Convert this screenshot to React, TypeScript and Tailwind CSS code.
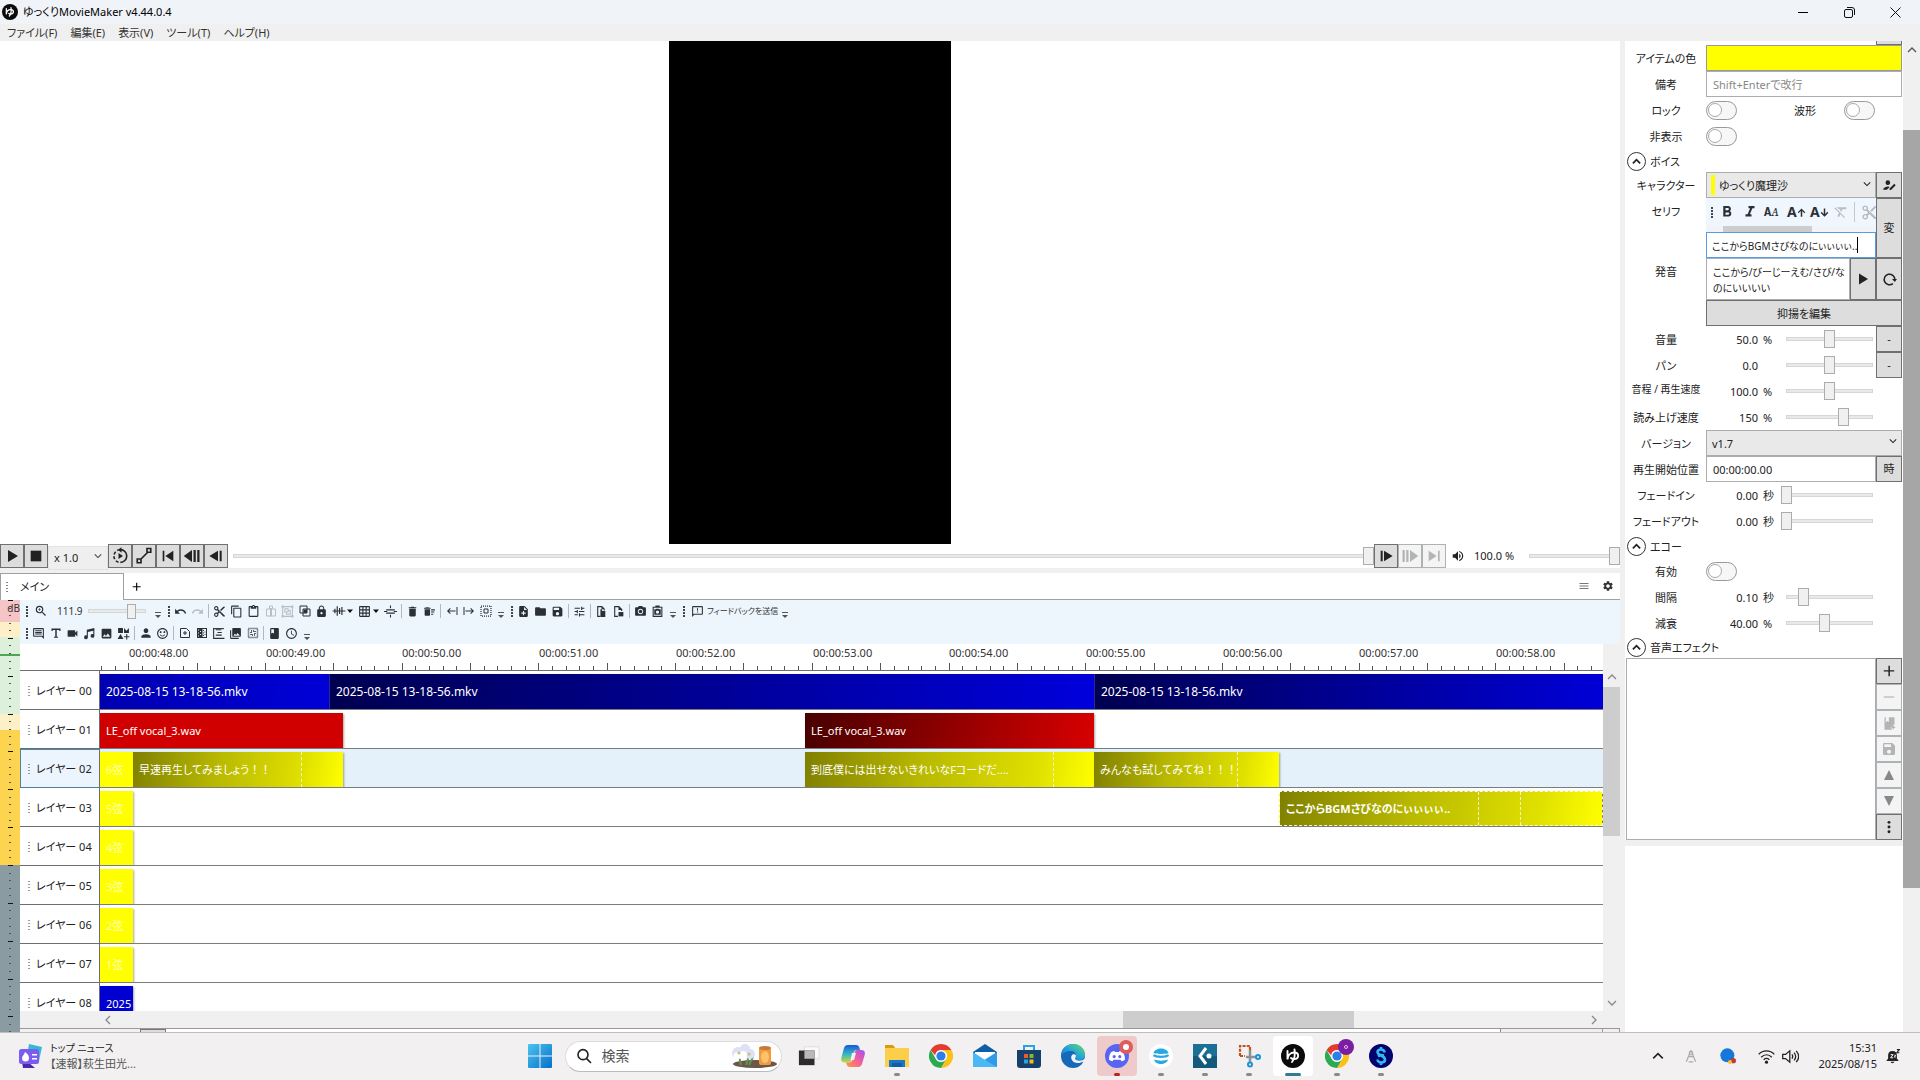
import React from "react";
import {
  MdZoomIn, MdUndo, MdRedo, MdContentCut, MdContentCopy, MdContentPaste, MdLock, MdGridOn,
  MdDelete, MdDeleteSweep, MdNoteAdd, MdFolder, MdSave, MdTune, MdPhotoCamera, MdOutlineFeedback,
  MdOutlineComment, MdVideocam, MdImage, MdPerson, MdBook, MdSchedule, MdPhotoLibrary,
  MdSettings, MdMenu, MdVolumeUp, MdFormatBold, MdFormatItalic, MdFormatClear, MdSentimentSatisfiedAlt,
} from "react-icons/md";

type Ch = { children?: React.ReactNode };

const THUMB =
  "m-0 h-[18px] w-full cursor-default appearance-none bg-transparent outline-none [&::-webkit-slider-thumb]:h-[18px] [&::-webkit-slider-thumb]:w-[11px] [&::-webkit-slider-thumb]:appearance-none [&::-webkit-slider-thumb]:border [&::-webkit-slider-thumb]:border-[#acacac] [&::-webkit-slider-thumb]:bg-[#f0f0f0]";
const THUMB_SM =
  "m-0 h-[15px] w-full cursor-default appearance-none bg-transparent outline-none [&::-webkit-slider-thumb]:h-[15px] [&::-webkit-slider-thumb]:w-[9px] [&::-webkit-slider-thumb]:appearance-none [&::-webkit-slider-thumb]:border [&::-webkit-slider-thumb]:border-[#acacac] [&::-webkit-slider-thumb]:bg-[#f0f0f0]";

function Slider({ value, label, small }: { value: number; label: string; small?: boolean }) {
  return (
    <span className="grid w-full items-center *:[grid-area:1/1]">
      <span className="mx-[5px] h-1 border border-[#d6d6d6] bg-[#e7eaea]" />
      <input type="range" aria-label={label} defaultValue={value} className={small ? THUMB_SM : THUMB} />
    </span>
  );
}

function Svg({ children, s = 14, vb = 24, className = "" }: Ch & { s?: number; vb?: number; className?: string }) {
  return (
    <svg width={s} height={s} viewBox={`0 0 ${vb} ${vb}`} fill="currentColor" className={className} aria-hidden="true">
      {children}
    </svg>
  );
}

function Chevron({ dir = "down", s = 10, className = "" }: { dir?: "up" | "down" | "left" | "right"; s?: number; className?: string }) {
  const d = { up: "M1 7l4-4 4 4", down: "M1 3l4 4 4-4", left: "M7 1L3 5l4 4", right: "M3 1l4 4-4 4" }[dir];
  return (
    <svg width={s} height={s} viewBox="0 0 10 10" fill="none" stroke="currentColor" strokeWidth="1.3" className={className} aria-hidden="true">
      <path d={d} />
    </svg>
  );
}

/* ---------- window frame ---------- */

function Logo({ s }: { s: number }) {
  return (
    <svg width={s} height={s} viewBox="0 0 24 24" aria-hidden="true">
      <circle cx="12" cy="12" r="12" fill="#0b0b0b" />
      <g fill="none" stroke="#fff" strokeWidth="1.9" strokeLinecap="round">
        <path d="M6.500 7v8.500c.3-4 3-7 6.500-7 5.500 0 5.500 6.500 0 6.500-1.500 0-2.500-.5-3-1" />
        <path d="M13.500 5.500c.8 5 .5 9-2.500 12.500" />
      </g>
    </svg>
  );
}

function TitleBar() {
  return (
    <header className="shrink-0">
      <div className="flex h-6 items-center bg-[#f0f4f9] pr-0.5 pl-0.5 text-black">
        <Logo s={16} />
        <h1 className="ml-[5px] flex-1 text-[11px] leading-4">ゆっくりMovieMaker v4.44.0.4</h1>
        <button aria-label="最小化" className="grid h-6 w-[46px] place-items-center">
          <span className="h-px w-2.5 bg-black" />
        </button>
        <button aria-label="元に戻す" className="grid h-6 w-[46px] place-items-center">
          <svg width="11" height="11" viewBox="0 0 11 11" fill="none" stroke="#111" aria-hidden="true">
            <rect x=".5" y="2.500" width="8" height="8" rx="1.500" />
            <path d="M3 .5h5a2.500 2.500 0 0 1 2.500 2.500v5" />
          </svg>
        </button>
        <button aria-label="閉じる" className="grid h-6 w-[46px] place-items-center">
          <svg width="11" height="11" viewBox="0 0 11 11" stroke="#111" aria-hidden="true">
            <path d="M.5.5l10 10M10.500.5l-10 10" />
          </svg>
        </button>
      </div>
      <nav className="flex h-[17px] items-center gap-[13px] bg-[#f0f0f0] pl-[7px] text-[11px] leading-4 text-[#333]">
        {["ファイル(F)", "編集(E)", "表示(V)", "ツール(T)", "ヘルプ(H)"].map((m) => (
          <button key={m}>{m}</button>
        ))}
      </nav>
    </header>
  );
}

/* ---------- preview ---------- */

function Btn({ children, label, off, className = "" }: Ch & { label: string; off?: boolean; className?: string }) {
  return (
    <button
      aria-label={label}
      disabled={off}
      className={`grid h-6 w-6 shrink-0 place-items-center border ${off ? "border-[#adb2b5] bg-[#f4f4f4] text-[#b4b4b4]" : "border-[#707070] bg-[#dddddd] text-[#222]"} ${className}`}
    >
      {children}
    </button>
  );
}

function PlayBar() {
  return (
    <div className="flex h-6 shrink-0 items-center bg-white">
      <Btn label="再生"><Svg s={16}><path d="M6 3v18l15-9z" /></Svg></Btn>
      <Btn label="停止"><Svg s={16}><path d="M4 4h16v16H4z" /></Svg></Btn>
      <div className="relative h-6 w-[60px] shrink-0">
        <select aria-label="再生速度" className="h-6 w-full appearance-none border border-[#e2e2e2] bg-[#efefef] pl-[5px] text-[11px] leading-4 text-[#222]">
          <option>x 1.0</option>
        </select>
        <Chevron s={8} className="pointer-events-none absolute top-2 right-1.5 text-[#444]" />
      </div>
      <Btn label="ループ再生">
        <Svg s={18}>
          <path d="M12.500 3.500a8.500 8.500 0 0 1 0 17" fill="none" stroke="currentColor" strokeWidth="2.200" />
          <path d="M10 20.300a8.500 8.500 0 0 1 0-16.300" fill="none" stroke="currentColor" strokeWidth="2.200" strokeDasharray="4 2.500" />
          <path d="M14 .2L9 3.700l5 3.800zM10 8v8l6-4z" />
        </Svg>
      </Btn>
      <Btn label="パス表示">
        <Svg s={18}>
          <path d="M16 2h5v5h-5zM3 16h5v5H3zM7 17L17 7" fill="none" stroke="currentColor" strokeWidth="2.200" />
        </Svg>
      </Btn>
      <Btn label="先頭へ"><Svg s={16}><path d="M4 4h2.500v16H4zM20 4v16L8 12z" /></Svg></Btn>
      <Btn label="5フレーム戻る"><Svg s={18}><path d="M12 4v16L1 12zM14 4h3v16h-3zM19 4h3v16h-3z" /></Svg></Btn>
      <Btn label="1フレーム戻る"><Svg s={16}><path d="M15 4v16L2 12zM17.500 4h3v16h-3z" /></Svg></Btn>
      <div className="flex min-w-0 flex-1"><Slider label="再生位置" value={100} /></div>
      <Btn label="1フレーム進む"><Svg s={16}><path d="M9 4v16l13-8zM4 4h3v16H4z" /></Svg></Btn>
      <Btn label="5フレーム進む" off><Svg s={18}><path d="M12 4v16l11-8zM2 4h3v16H2zM7 4h3v16H7z" /></Svg></Btn>
      <Btn label="末尾へ" off><Svg s={16}><path d="M18 4h2.500v16H18zM4 4v16l12-8z" /></Svg></Btn>
      <MdVolumeUp className="ml-[5px] size-[14px] shrink-0 text-[#222]" />
      <span className="ml-[9px] w-[50px] shrink-0 text-[11px] leading-4 whitespace-nowrap text-[#222]">100.0 %</span>
      <div className="flex w-[96px] shrink-0"><Slider label="音量" value={100} /></div>
    </div>
  );
}

/* ---------- timeline ---------- */

function Grip() {
  return (
    <svg width="3" height="13" viewBox="0 0 3 13" className="mr-px ml-[3px] shrink-0" fill="#444" aria-hidden="true">
      <path d="M0 1h2v2H0zM0 4h2v2H0zM0 7h2v2H0zM0 10h2v2H0z" />
    </svg>
  );
}
function Sep() {
  return <span className="mx-[2px] h-[14px] w-px shrink-0 bg-[#b3b8bd]" />;
}
function More() {
  return (
    <button aria-label="その他" className="mx-[3px] grid h-[22px] w-[8px] shrink-0 place-items-end pb-[3px]">
      <svg width="7" height="7" viewBox="0 0 7 7" fill="#555" aria-hidden="true"><path d="M0 0h6v1H0zM0 3h6L3 6z" /></svg>
    </button>
  );
}
function Tool({ children, label, off }: Ch & { label: string; off?: boolean }) {
  return (
    <button aria-label={label} disabled={off} className={`grid h-[22px] w-[17px] shrink-0 place-items-center ${off ? "text-[#b9bec3]" : "text-[#2b3036]"}`}>
      {children}
    </button>
  );
}
function Caret() {
  return <Svg s={6} className="mr-[3px] shrink-0 text-[#111]"><path d="M0 6h24L12 20z" /></Svg>;
}
const I = "size-[13px]";

function Toolbars() {
  return (
    <div className="h-11 shrink-0 bg-[#edf5fd] pl-[3px]">
      <div className="flex h-[22px] items-center">
        <Grip />
        <span className="w-0.5 shrink-0" />
        <Tool label="拡大"><MdZoomIn className="size-[14px]" /></Tool>
        <span className="ml-2 w-[24px] shrink-0 text-[10px] leading-4 text-[#333]">111.9</span>
        <div className="ml-[2px] flex w-[68px] shrink-0"><Slider small label="ズーム" value={74} /></div>
        <More />
        <Grip />
        <Tool label="元に戻す"><MdUndo className={I} /></Tool>
        <Tool label="やり直し" off><MdRedo className={I} /></Tool>
        <Sep />
        <Tool label="切り取り"><MdContentCut className={I} /></Tool>
        <Tool label="コピー"><MdContentCopy className={I} /></Tool>
        <Tool label="貼り付け"><MdContentPaste className={I} /></Tool>
        <Tool label="特殊貼り付け" off><Svg s={12}><path d="M3 8h18v14H3zM9 2h6v5H9zM11 8h2v14h-2z" fill="none" stroke="currentColor" strokeWidth="2" /></Svg></Tool>
        <Tool label="グループ化" off>
          <Svg s={13}><path fillRule="evenodd" d="M1 1v4h1v14H1v4h4v-1h14v1h4v-4h-1V5h1V1h-4v1H5V1zM5 4h14v1h1v14h-1v1H5v-1H4V5h1zM6 6v8h3v4h9V9h-4V6zM8 8h4v4H8zM14 11h2v5h-5v-2h3z" /></Svg>
        </Tool>
        <Tool label="グループ解除">
          <Svg s={12}><path d="M2 2h14v14H2zM8 8h14v14H8z" fill="none" stroke="currentColor" strokeWidth="2" /><path d="M9 9h7v7H9z" /></Svg>
        </Tool>
        <Tool label="ロック"><MdLock className={I} /></Tool>
        <Tool label="波形"><Svg s={14}><path d="M1 11h22v2H1zM4 8h2v8H4zM8 4h2v16H8zM12 7h2v10h-2zM16 5h2v14h-2z" /></Svg></Tool>
        <Caret />
        <Tool label="グリッド"><MdGridOn className={I} /></Tool>
        <Caret />
        <Tool label="分割"><Svg s={13}><path d="M11 1h2v5h-2zM11 18h2v5h-2zM4 8h16v2H4zM4 14h16v2H4zM0 11h6v2H0zM18 11h6v2h-6z" /></Svg></Tool>
        <Sep />
        <Tool label="削除"><MdDelete className={I} /></Tool>
        <Tool label="詰めて削除"><MdDeleteSweep className={I} /></Tool>
        <Sep />
        <Tool label="前へ詰める"><Svg s={12}><path d="M21 4h2v16h-2zM8 6l1.500 1.500L6 11h13v2H6l3.500 3.500L8 18l-6-6z" /></Svg></Tool>
        <Tool label="後ろへ詰める"><Svg s={12}><path d="M1 4h2v16H1zM16 6l-1.500 1.500L18 11H5v2h13l-3.500 3.500L16 18l6-6z" /></Svg></Tool>
        <Tool label="全選択">
          <Svg s={12}><path d="M2 2h20v20H2z" fill="none" stroke="currentColor" strokeWidth="2.500" strokeDasharray="2 2" /><path d="M8 8h8v8H8z" fill="none" stroke="currentColor" strokeWidth="2" /></Svg>
        </Tool>
        <More />
        <Grip />
        <Tool label="新規"><MdNoteAdd className={I} /></Tool>
        <Tool label="開く"><MdFolder className={I} /></Tool>
        <Tool label="保存"><MdSave className={I} /></Tool>
        <Sep />
        <Tool label="設定"><MdTune className={I} /></Tool>
        <Sep />
        <Tool label="複製"><Svg s={13}><path d="M4 2h9l5 5v3h-2V8h-4V4H6v16h4v2H4z" /><path d="M10 8h3v3h6v11h-9z" /></Svg></Tool>
        <Tool label="書き出し"><Svg s={13}><path d="M4 2h9l6 6v3h-2V9h-5V4H6v16h5v2H4z" /><path d="M12 13h9v8h-9z" /></Svg></Tool>
        <Sep />
        <Tool label="スクリーンショット"><MdPhotoCamera className={I} /></Tool>
        <Tool label="画像をコピー"><Svg s={13}><path fillRule="evenodd" d="M8 1h8v2h5v19H3V3h5zM5 5v15h14V5zM6 8h3l1-1h4l1 1h3v10H6zM12 10a3 3 0 1 0 0 6 3 3 0 0 0 0-6z" /></Svg></Tool>
        <More />
        <Grip />
        <button className="ml-1 flex h-[22px] shrink-0 items-center gap-[3px] text-[8px] leading-4 whitespace-nowrap text-[#333]">
          <MdOutlineFeedback className={I} />フィードバックを送信
        </button>
        <More />
      </div>
      <div className="flex h-[22px] items-center">
        <Grip />
        <Tool label="ボイス"><MdOutlineComment className={I} /></Tool>
        <Tool label="テキスト"><Svg s={12}><path d="M3 3h18v5h-2l-1-2h-4.500v13l2.500 1v1.500H8V20l2.500-1V6H6L5 8H3z" /></Svg></Tool>
        <Tool label="動画"><MdVideocam className={I} /></Tool>
        <Tool label="音声"><Svg s={13}><path d="M21 2v14.500a3.500 3.500 0 1 1-2-3.200V7L9 9v10a3.500 3.500 0 1 1-2-3.200V5z" /></Svg></Tool>
        <Tool label="画像"><MdImage className={I} /></Tool>
        <Tool label="図形"><Svg s={13}><path d="M2 2h9v9H2zM6.500 13L12 22H1zM17.500 7L22 2v9h-9V2zM17 13h2v4h4v2h-4v4h-2v-4h-4v-2h4z" /></Svg></Tool>
        <Sep />
        <Tool label="立ち絵"><MdPerson className="size-[14px]" /></Tool>
        <Tool label="表情"><MdSentimentSatisfiedAlt className={I} /></Tool>
        <Sep />
        <Tool label="エフェクト"><Svg s={12}><path d="M3 3h12l6 6v12H3z" fill="none" stroke="currentColor" strokeWidth="2" /><path d="M11 8h2v3h3v2h-3v3h-2v-3H8v-2h3z" /></Svg></Tool>
        <Tool label="シーン切り替え"><Svg s={12}><path fillRule="evenodd" d="M2 2h20v20H2zM13 4v16h7V4z" /><path fill="#edf5fd" d="M4 5h2v2H4zM4 11h2v2H4zM4 17h2v2H4zM8 8h2v2H8zM8 14h2v2H8z" /><path d="M14 6h2v2h-2zM14 11h2v2h-2zM14 16h2v2h-2zM17 9h2v2h-2zM17 14h2v2h-2z" /></Svg></Tool>
        <Tool label="グループ制御"><Svg s={13}><path d="M2 2h2v18h19v2H2zM7 4h10v2H7zM10 9h8v2h-8zM7 14h11v2H7z" /><path d="M2 2h20v2H2z" /></Svg></Tool>
        <Tool label="画像一覧"><MdPhotoLibrary className={I} /></Tool>
        <Tool label="範囲"><Svg s={12}><path d="M3 3h18v18H3zM8 8h8v8H8z" fill="none" stroke="currentColor" strokeWidth="3" strokeDasharray="2 2" /></Svg></Tool>
        <Sep />
        <Tool label="テンプレート"><MdBook className={I} /></Tool>
        <Tool label="履歴"><MdSchedule className={I} /></Tool>
        <More />
      </div>
    </div>
  );
}

const SEC = 136.7;
const TIMES = ["48", "49", "50", "51", "52", "53", "54", "55", "56", "57", "58"];
const TICKS = Array.from({ length: 110 }, (_, i) => ({ x: Math.round((i * SEC) / 10) + 2, tall: (i + 8) % 5 === 0 }));

function Ruler() {
  return (
    <div className="flex h-[27px] shrink-0 flex-col justify-between overflow-hidden border-b border-[#6e6e6e] bg-white pl-[79px] text-[#333]">
      <div className="flex pl-[30px] text-[11px] leading-[18px]">
        {TIMES.map((t, i) => (
          <span key={t} className="shrink-0" style={{ width: Math.round((i + 1) * SEC) - Math.round(i * SEC) }}>
            00:00:{t}.00
          </span>
        ))}
      </div>
      <svg className="h-[7px] w-full shrink-0" aria-hidden="true">
        {TICKS.map((t) => (
          <rect key={t.x} x={t.x} y={t.tall ? 0 : 3} width="1" height={t.tall ? 7 : 4} fill="#555" />
        ))}
      </svg>
    </div>
  );
}

function Clip({ children, className, marks = [], label = "" }: Ch & { className: string; marks?: number[]; label?: string }) {
  return (
    <div className={`relative flex h-[35px] shrink-0 items-center overflow-hidden pl-[6px] whitespace-nowrap shadow-[1px_1px_2px_rgba(0,0,0,.35)] ${className}`}>
      {label}
      {children}
      {marks.map((m) => (
        <span key={m} className="absolute inset-y-0 border-l border-dashed border-white/80" style={{ right: m }} />
      ))}
    </div>
  );
}

const YELLOW = "text-[11px] bg-[linear-gradient(100deg,#808000,#b8b800_40%,#e0e000_80%,#ffff00)]";

function Bangs({ n }: { n: number }) {
  return <span className="[font-feature-settings:normal]">{"！".repeat(n)}</span>;
}

function Rows() {
  const strings = ["6弦", "5弦", "4弦", "3弦", "2弦", "1弦"];
  const str = (i: number) => <Clip className="w-[33px] bg-[#ffff00] text-[11px] text-[#ffffb0]" label={strings[i]} />;
  const rows: React.ReactNode[] = [
    <>
      <Clip className="w-[229px] bg-[linear-gradient(100deg,#0000b0,#0000d8)]" label="2025-08-15 13-18-56.mkv" />
      <Clip className="w-[765px] border-l border-[#2a2a90] bg-[linear-gradient(98deg,#000050,#0000dc)]" label="2025-08-15 13-18-56.mkv" />
      <Clip className="min-w-0 flex-1 border-l border-[#2a2a90] bg-[linear-gradient(98deg,#000050,#0000d8)]" label="2025-08-15 13-18-56.mkv" />
    </>,
    <>
      <Clip className="w-[243px] bg-[#d00000] text-[11px]" label="LE_off vocal_3.wav" />
      <Clip className="ml-[462px] w-[289px] bg-[linear-gradient(100deg,#480000,#d80000)] text-[11px]" label="LE_off vocal_3.wav" />
    </>,
    <>
      {str(0)}
      <Clip className={`w-[210px] ${YELLOW}`} marks={[41]} label="早速再生してみましょう"><Bangs n={2} /></Clip>
      <Clip className={`ml-[462px] w-[289px] ${YELLOW}`} marks={[40]} label="到底僕には出せないきれいなFコードだ...." />
      <Clip className={`w-[185px] ${YELLOW}`} marks={[41]} label="みんなも試してみてね"><Bangs n={3} /></Clip>
    </>,
    <>
      {str(1)}
      <Clip className={`ml-[1146px] min-w-0 flex-1 border border-dashed border-white/90 font-bold ${YELLOW}`} marks={[81, 123]} label="ここからBGMさびなのにぃぃぃぃ.." />
    </>,
    str(2), str(3), str(4), str(5),
    <Clip className="w-[33px] bg-[#0000d0] text-[11px]" label="2025" />,
  ];
  return (
    <div className="min-w-0 flex-1 overflow-hidden bg-white">
      {rows.map((r, i) => (
        <div key={i} className="flex h-[39px]">
          <div className={`flex w-20 shrink-0 items-center border-r border-b border-[#6e6e6e] pt-0.5 pl-2 text-[11px] leading-4 whitespace-nowrap text-[#222] ${i === 2 ? "border-b-[#4f7fa0] bg-[#ecf5fd] shadow-[inset_1px_1px_0_#4f86a8]" : ""}`}>
            <svg width="2" height="11" viewBox="0 0 2 11" fill="#999" className="mr-[6px]" aria-hidden="true"><path d="M0 0h2v1H0zM0 3h2v1H0zM0 6h2v1H0zM0 9h2v1H0z" /></svg>
            レイヤー 0{i}
          </div>
          <div className={`flex min-w-0 flex-1 overflow-hidden border-b border-[#7c7c7c] pt-[3px] text-[12px] leading-4 text-white ${i === 2 ? "bg-[#e4f1fb]" : ""}`}>{r}</div>
        </div>
      ))}
    </div>
  );
}

const BANDS = ["h-[22px] bg-[#f5c4c6]", "h-[15px] bg-[#fdf0c6]", "h-[77px] bg-[#dcf0dc]", "h-[16px] bg-[#fdf0c6]", "h-[135px] bg-[#fdd44f]", "flex-1 bg-[#8b9ba2]"];

function Meter() {
  return (
    <div className="relative flex w-5 shrink-0 flex-col overflow-hidden">
      {BANDS.map((b) => <div key={b} className={b} />)}
      <svg className="absolute inset-0 h-full w-full" aria-hidden="true">
        {Array.from({ length: 60 }, (_, i) => {
          const long = i % 5 === 0;
          return <rect key={i} x={long ? 8 : 9} y={Math.round(i * 7.57)} width={long ? 5 : 2} height="1" fill={long ? "#111" : "#555"} />;
        })}
        <rect x="0" y="54" width="20" height="2" fill="#4ea552" />
      </svg>
      <span className="absolute top-0 right-0 text-[10px] leading-4 text-[#333]">dB</span>
    </div>
  );
}

function Timeline() {
  return (
    <section className="flex shrink-0 flex-col">
      <div className="flex h-[27px] items-stretch bg-white">
        <button className="flex w-[124px] items-center border border-b-0 border-[#a0a0a0] pl-[5px] text-[11px] leading-4 text-[#222]">
          <svg width="2" height="10" viewBox="0 0 2 10" fill="#888" className="mr-3" aria-hidden="true"><path d="M0 0h2v1H0zM0 3h2v1H0zM0 6h2v1H0zM0 9h2v1H0z" /></svg>
          メイン
        </button>
        <div className="flex flex-1 items-center border-b border-[#a0a0a0] pl-[8px]">
          <button aria-label="タブを追加"><Svg s={9}><path d="M11 2h3v9h9v3h-9v9h-3v-9H2v-3h9z" /></Svg></button>
          <button aria-label="メニュー" className="mr-3 ml-auto text-[#777]"><MdMenu className="size-3" /></button>
          <button aria-label="設定" className="mr-1.5 text-[#333]"><MdSettings className="size-3" /></button>
        </div>
      </div>
      <div className="flex">
        <Meter />
        <div className="flex min-w-0 flex-1 flex-col">
          <Toolbars />
          <div className="flex">
            <div className="min-w-0 flex-1">
              <Ruler />
              <div className="flex h-[340px]"><Rows /></div>
            </div>
            <div className="flex w-[17px] shrink-0 flex-col items-center bg-[#f0f0f0] pt-7 pb-[3px] text-[#888]">
              <Chevron dir="up" className="mb-[5px]" />
              <div className="h-[149px] w-full bg-[#cdcdcd]" />
              <Chevron className="mt-auto" />
            </div>
          </div>
          <div className="flex h-[17px] items-center bg-[#f0f0f0] pr-[21px] pl-[83px] text-[#888]">
            <Chevron dir="left" />
            <div className="flex h-full flex-1 justify-end"><div className="mr-[235px] h-full w-[231px] bg-[#cdcdcd]" /></div>
            <Chevron dir="right" />
          </div>
          <div className="flex h-1 border-t border-[#999] bg-white">
            <div className="w-[120px] bg-[#f2f2f2]" />
            <div className="w-[26px] border border-b-0 border-[#777] bg-[#ddd]" />
            <div className="flex-1" />
            <div className="w-[102px] border-l border-[#888] bg-[#f0f0f0]" />
            <div className="w-[18px] border-x border-[#999] bg-[#f0f0f0]" />
          </div>
        </div>
      </div>
    </section>
  );
}

/* ---------- properties ---------- */

function Row({ label, children, id, small }: Ch & { label: string; id?: string; small?: boolean }) {
  return (
    <div className="flex h-[26px] items-center">
      <label htmlFor={id} className={`w-[80px] shrink-0 text-center whitespace-nowrap ${small ? "pb-1 text-[10px]" : "pt-0.5"}`}>{label}</label>
      {children}
    </div>
  );
}

function Toggle({ id }: { id: string }) {
  return (
    <input
      id={id}
      type="checkbox"
      role="switch"
      className="flex h-[19px] w-[31px] shrink-0 appearance-none items-center rounded-full border border-[#999] bg-[#f7f7f7] pl-px before:size-[14px] before:rounded-full before:border before:border-[#aaa] before:bg-white before:content-['']"
    />
  );
}

function SliderRow({ label, value, unit, pos, btn, small }: { label: string; value: string; unit: string; pos: number; btn?: boolean; small?: boolean }) {
  return (
    <Row label={label} small={small}>
      <span className="w-[52px] shrink-0 pt-0.5 text-right">{value}</span>
      <span className="ml-[5px] w-[18px] shrink-0 pt-0.5">{unit}</span>
      <div className="mr-[-2px] flex min-w-0 flex-1"><Slider label={label} value={pos} /></div>
      {btn ? <PBtn label={`${label}のアニメーション`}>-</PBtn> : <span className="w-[26px] shrink-0" />}
    </Row>
  );
}

function PBtn({ children, label, off, tall }: Ch & { label: string; off?: boolean; tall?: boolean }) {
  return (
    <button
      aria-label={label}
      disabled={off}
      className={`relative grid w-[26px] shrink-0 place-items-center border ${tall ? "h-full" : "h-[26px]"} ${off ? "border-[#adb2b5] bg-[#f4f4f4] text-[#b4b4b4]" : "border-[#707070] bg-[#dddddd] text-[#222]"}`}
    >
      {children}
    </button>
  );
}

function Head({ children, className }: Ch & { className: string }) {
  return (
    <button className={`flex w-full items-center gap-1 pt-px pl-px ${className}`}>
      <span className="grid size-[19px] place-items-center rounded-full border border-[#333]">
        <svg width="9" height="9" viewBox="0 0 10 10" fill="none" stroke="#222" strokeWidth="2" aria-hidden="true"><path d="M1 7l4-4 4 4" /></svg>
      </span>
      <span className="pt-px">{children}</span>
    </button>
  );
}

function Properties() {
  return (
    <aside className="flex w-[278px] shrink-0 flex-col bg-[#f0f0f0] text-[11px] leading-4 text-[#222]">
      <div className="bg-white pr-px pl-px">
        <div className="flex h-1 justify-end"><div className="w-[26px] border border-t-0 border-[#707070] bg-[#ddd]" /></div>
        <Row label="アイテムの色"><button aria-label="アイテムの色" className="h-[26px] flex-1 border border-[#999] bg-[#ffff00]" /></Row>
        <Row label="備考" id="memo">
          <input id="memo" placeholder="Shift+Enterで改行" className="h-[26px] min-w-0 flex-1 border border-[#abadb3] px-1.5 pt-px outline-none placeholder:text-[#888]" />
        </Row>
        <Row label="ロック" id="lock">
          <Toggle id="lock" />
          <label htmlFor="wave" className="mr-7 ml-auto pt-0.5">波形</label>
          <Toggle id="wave" />
          <span className="w-[27px]" />
        </Row>
        <Row label="非表示" id="hide"><Toggle id="hide" /></Row>
        <Head className="h-[23px]">ボイス</Head>
        <Row label="キャラクター" id="chara">
          <div className="relative h-[26px] min-w-0 flex-1">
            <select id="chara" className="h-full w-full appearance-none border border-[#acacac] bg-[#e9e9e9] pt-px pl-[12px]"><option>ゆっくり魔理沙</option></select>
            <span className="pointer-events-none absolute top-[3px] left-[5px] h-5 w-1 bg-[#ffff00]" />
            <Chevron s={8} className="pointer-events-none absolute top-2 right-[5px]" />
          </div>
          <PBtn label="キャラクター編集">
            <Svg s={14}><path d="M10 4a4 4 0 1 1 0 8 4 4 0 0 1 0-8zM2 20c0-3 4-5.500 9-5.500L13 16l-5 4zM21 10l2.500 2.500-8 8H13V18z" /></Svg>
          </PBtn>
        </Row>
        <div className="flex h-[60px]">
          <label htmlFor="serif" className="w-[80px] shrink-0 pt-1.5 text-center">セリフ</label>
          <div className="flex min-w-0 flex-1 flex-col">
            <div className="flex h-[28px] items-center overflow-hidden bg-[#f0f6fd] pl-[2px] text-[#2b3036]">
              <Grip />
              <button aria-label="太字" className="ml-[3px] w-[23px] shrink-0"><MdFormatBold className="size-[18px]" /></button>
              <button aria-label="斜体" className="w-[23px] shrink-0"><MdFormatItalic className="size-[18px]" /></button>
              <button aria-label="フォント" className="w-[23px] shrink-0 text-left leading-none">
                <span className="font-mono text-[12px] font-bold">A</span><span className="font-serif text-[13px] italic">A</span>
              </button>
              <button aria-label="文字を大きく" className="flex w-[23px] shrink-0 items-center text-[14px] font-bold">A<Svg s={9}><path d="M12 1l10 10-2 3-6-6v15h-4V8l-6 6-2-3z" /></Svg></button>
              <button aria-label="文字を小さく" className="flex w-[23px] shrink-0 items-center text-[14px] font-bold">A<Svg s={9}><path d="M12 23l10-10-2-3-6 6V1h-4v15l-6-6-2 3z" /></Svg></button>
              <button aria-label="書式をクリア" className="w-[21px] shrink-0 text-[#b9bec3]"><MdFormatClear className="size-4" /></button>
              <span className="mr-1.5 h-5 w-px shrink-0 bg-[#c3c8cd]" />
              <MdContentCut className="size-[17px] shrink-0 text-[#b4babf]" />
            </div>
            <div className="h-1.5 bg-[#f0f3f7] pl-[17px]"><div className="h-full w-[89px] bg-[#cdcdcd]" /></div>
            <div className="relative flex h-[26px]">
              <input id="serif" defaultValue="ここからBGMさびなのにぃぃぃぃ.." className="h-full w-full border border-[#569de5] bg-white pl-[5px] text-[10px] outline-none" />
              <span className="absolute top-[5px] right-[18px] h-4 w-px bg-black" />
            </div>
          </div>
          <PBtn label="変換" tall>変</PBtn>
        </div>
        <div className="flex h-[42px]">
          <label htmlFor="yomi" className="w-[80px] shrink-0 pt-1.5 text-center">発音</label>
          <textarea id="yomi" defaultValue={"ここから/びーじーえむ/さび/な\nのにいいいい"} className="min-w-0 flex-1 resize-none overflow-hidden border border-[#abadb3] px-1.5 pt-[5px] text-[10px] leading-4 whitespace-pre outline-none" />
          <PBtn label="発音を再生" tall><Svg s={12}><path d="M4 1v22l18-11z" /></Svg></PBtn>
          <PBtn label="発音を再生成" tall>
            <Svg s={15}><path d="M20.500 12a8.500 8.500 0 1 0-3 6.500" fill="none" stroke="currentColor" strokeWidth="2.400" /><path d="M16 11h8l-3.500 5z" /></Svg>
          </PBtn>
        </div>
        <div className="pl-[80px]"><button className="block h-[26px] w-full border border-[#707070] bg-[#dddddd] pt-0.5">抑揚を編集</button></div>
        <SliderRow label="音量" value="50.0" unit="%" pos={50} btn />
        <SliderRow label="パン" value="0.0" unit="" pos={50} btn />
        <SliderRow label="音程 / 再生速度" value="100.0" unit="%" pos={50} small />
        <SliderRow label="読み上げ速度" value="150" unit="%" pos={66} />
        <Row label="バージョン" id="ver">
          <div className="relative h-[26px] min-w-0 flex-1">
            <select id="ver" className="h-full w-full appearance-none border border-[#acacac] bg-[#e9e9e9] pt-px pl-[5px]"><option>v1.7</option></select>
            <Chevron s={8} className="pointer-events-none absolute top-[7px] right-[5px]" />
          </div>
        </Row>
        <Row label="再生開始位置" id="start">
          <input id="start" defaultValue="00:00:00.00" className="h-[26px] min-w-0 flex-1 border border-[#abadb3] px-1.5 outline-none" />
          <PBtn label="時間">時</PBtn>
        </Row>
        <SliderRow label="フェードイン" value="0.00" unit="秒" pos={0} />
        <SliderRow label="フェードアウト" value="0.00" unit="秒" pos={0} />
        <Head className="h-[24px]">エコー</Head>
        <Row label="有効" id="echo"><Toggle id="echo" /></Row>
        <SliderRow label="間隔" value="0.10" unit="秒" pos={20} />
        <SliderRow label="減衰" value="40.00" unit="%" pos={44} />
        <Head className="h-[22px]">音声エフェクト</Head>
        <div className="flex">
          <div className="flex-1 border border-[#abadb3]" />
          <div className="flex flex-col">
            <PBtn label="追加"><Svg s={14}><path d="M11 3h2.500v7.500H21V13h-7.500v8H11v-8H3v-2.500h8z" /></Svg></PBtn>
            <PBtn label="削除" off><Svg s={14}><path d="M3 11h18v2H3z" /></Svg></PBtn>
            <PBtn label="テンプレートに追加" off><Svg s={15}><path fillRule="evenodd" d="M4 2h2v8l2.500-2L11 10V2h9v12h-3v3h-3v3h2v2H4zM17 15h2v2h2v2h-2v2h-2v-2h-2v-2h2z" /></Svg></PBtn>
            <PBtn label="保存" off><MdSave className="size-4" /></PBtn>
            <PBtn label="上へ" off><Svg s={12} className="text-[#888]"><path d="M12 2l10 20H2z" /></Svg></PBtn>
            <PBtn label="下へ" off><Svg s={12} className="text-[#888]"><path d="M12 22L2 2h20z" /></Svg></PBtn>
            <PBtn label="その他"><Svg s={14}><circle cx="12" cy="4" r="2.500" /><circle cx="12" cy="12" r="2.500" /><circle cx="12" cy="20" r="2.500" /></Svg></PBtn>
          </div>
        </div>
      </div>
      <div className="mt-1.5 flex-1 bg-white" />
    </aside>
  );
}

/* ---------- taskbar ---------- */

function Chrome() {
  return (
    <Svg s={24}>
      <path fill="#e33b2e" d="M12 0a12 12 0 0 1 10.400 6H12a6 6 0 0 0-5.200 3v3L1.600 6A12 12 0 0 1 12 0z" />
      <path fill="#fbc116" d="M22.400 6A12 12 0 0 1 12 24l5.200-9a6 6 0 0 0-.7-7L12 6z" />
      <path fill="#2da94f" d="M1.600 6A12 12 0 0 0 12 24l5.200-9a6 6 0 0 1-10.400 0z" />
      <circle cx="12" cy="12" r="5.800" fill="#fff" /><circle cx="12" cy="12" r="4.600" fill="#2f7de9" />
    </Svg>
  );
}

const APPS: { name: string; run?: string; tile?: string; icon: React.ReactNode }[] = [
  { name: "タスクビュー", icon: <Svg s={22}><path fill="#fafafa" stroke="#ddd" d="M7 2h16v13H7z" /><path fill="#2c2c2c" d="M1 6h17v16H1z" /><path fill="#b9b9b9" d="M7 6h11v9H7z" /></Svg> },
  { name: "Copilot", icon: (
    <Svg s={24}>
      <defs>
        <linearGradient id="cpa" x1="0" y1="0" x2="0" y2="1"><stop offset="0" stopColor="#1b57d6" /><stop offset=".5" stopColor="#2fb5c8" /><stop offset="1" stopColor="#c8d83c" /></linearGradient>
        <linearGradient id="cpb" x1="1" y1="0" x2="0" y2="1"><stop offset="0" stopColor="#a54ff0" /><stop offset=".5" stopColor="#f2609a" /><stop offset="1" stopColor="#ff9a3c" /></linearGradient>
      </defs>
      <path fill="url(#cpa)" d="M7 1h8c2 0 3 1 3.500 3l.5 2h-3c-2 0-3 1-3.600 3l-2 7c-.5 2-1.500 2.500-3.400 2.500H4c-3.500 0-4.500-2-3.500-5.500l2.500-9C3.600 2 5 1 7 1z" />
      <path fill="url(#cpb)" d="M17 23H9c-2 0-3-1-3.500-3L5 18.500h3c2 0 3-1 3.600-3l2-7C14.100 6.500 15 6 17 6h3c3.500 0 4.500 2 3.500 5.500l-2.500 8.500c-.6 2-2 3-4 3z" />
      <path fill="#f3f2f3" d="M11 9l4 0-2 7h-3.500z" />
    </Svg>) },
  { name: "エクスプローラー", run: "w-1.5 bg-[#8a8a8a]", icon: <Svg s={24}><path fill="#d99a12" d="M0 1h8l3 4H0z" /><path fill="#fbcf4a" d="M0 4h24v19H0z" /><path fill="#1b74c4" d="M4 16h16v7H4z" /><path fill="#0f5da8" d="M7 19h10v4H7z" /></Svg> },
  { name: "Chrome", icon: <Chrome /> },
  { name: "メール", icon: <Svg s={24}><path fill="#0f5ca8" d="M12 0l12 8v3H0V8z" /><path fill="#fff" d="M2 8h20v9H2z" /><path fill="#2f9be8" d="M24 8v15H0z" /><path fill="#49b8f5" d="M0 8l12 8L24 23H0z" /></Svg> },
  { name: "Microsoft Store", icon: <Svg s={24}><path fill="none" stroke="#27a5e0" strokeWidth="2" d="M7 7V2h10v5" /><path fill="#173f6b" d="M0 6h24v15a3 3 0 0 1-3 3H3a3 3 0 0 1-3-3z" /><path fill="#ef5a2b" d="M7 10h4v4H7z" /><path fill="#80bb2a" d="M12.500 10h4v4h-4z" /><path fill="#27a5e0" d="M7 15.500h4v4H7z" /><path fill="#fbb917" d="M12.500 15.500h4v4h-4z" /></Svg> },
  { name: "Edge", icon: (
    <Svg s={24}>
      <defs><linearGradient id="edg" x1="0" y1="1" x2="1" y2="0"><stop offset="0" stopColor="#1565c0" /><stop offset=".5" stopColor="#21a5dc" /><stop offset="1" stopColor="#6ade5c" /></linearGradient></defs>
      <circle cx="12" cy="12" r="12" fill="#1668b8" />
      <path fill="url(#edg)" d="M0 12C0 5 5 0 12 0s12 5 12 10.500c0 3.500-3 6-6 6-2.500 0-4-1-4-2 0-.8 1-1.200 1-3C15 9 13 7 9.500 7 5 7 1.500 9.500 0 12z" />
      <path fill="#f3f2f3" d="M11.500 10.500c-2.500 2-1.500 8 4.500 8.500 2.500.2 4.500-.5 6.500-1.500-.8 1.500-1.500 2-1.500 2l3-.5V14c-1 1.800-3 2.700-5.500 2.700-2.500 0-4.500-.8-4.500-2.200 0-.8 1-1.200 1-3-.8-1.300-2.200-1.500-3.500-1z" />
    </Svg>) },
  { name: "Discord", run: "w-1.5 bg-[#b3261e]", tile: "bg-[#efcaca]", icon: (
    <span className="relative block">
      <Svg s={24}><circle cx="12" cy="12" r="12" fill="#5865f2" /><path fill="#fff" fillRule="evenodd" d="M9.500 7l.5 1h4l.5-1c1.500.2 2.500.6 3.500 1.200C19.500 10.500 20 13 20 15.500c-1 1-2.300 1.500-3.500 1.800l-1-1.500h-7l-1 1.500c-1.200-.3-2.500-.8-3.500-1.800 0-2.500.5-5 2-7.300C7 7.600 8 7.200 9.500 7zM9.200 11a1.600 1.600 0 1 0 0 3.200 1.600 1.600 0 0 0 0-3.200zm5.600 0a1.600 1.600 0 1 0 0 3.200 1.600 1.600 0 0 0 0-3.200z" /></Svg>
      <span className="absolute -top-1 -right-1 grid size-[14px] place-items-center rounded-full bg-[#de5c5c]"><span className="size-1.5 rounded-full bg-white" /></span>
    </span>) },
  { name: "オーディオ", run: "w-1.5 bg-[#8a8a8a]", icon: <Svg s={24}><circle cx="12" cy="12" r="12" fill="#fff" /><path fill="#28a8e0" d="M4.500 9c1.500-6 13.500-6 15 0-1 1.200-14 1.200-15 0zM4 12c0-1.500 1.500-2 2.500-1.200 3 1.200 8 1.200 11 0 1-.8 2.500-.3 2.500 1.200-2 2.500-14 2.500-16 0zM5 15.500c4 1.500 10 1.500 14 0-1.500 6-12.500 6-14 0z" /></Svg> },
  { name: "キュー", run: "w-1.5 bg-[#8a8a8a]", icon: <Svg s={24}><path fill="#145a7c" d="M0 0h24v24H0z" /><path fill="#1c7096" d="M0 0h24v12H0z" /><path fill="none" stroke="#fff" strokeWidth="3" d="M13 4l-6 8 6 8" /><circle cx="16" cy="12" r="2.500" fill="#fff" /></Svg> },
  { name: "Snipping Tool", run: "w-1.5 bg-[#8a8a8a]", icon: <Svg s={24}><path fill="none" stroke="#c0531a" strokeWidth="2.200" strokeDasharray="3 1.200" d="M3 12V2h10v6M3 12h5" /><path fill="none" stroke="#8b9198" strokeWidth="2.500" d="M13 6v12M9 13h10" /><circle cx="13" cy="20.500" r="2" fill="none" stroke="#1d93d8" strokeWidth="2" /><circle cx="21" cy="13" r="2" fill="none" stroke="#1d93d8" strokeWidth="2" /></Svg> },
  { name: "ゆっくりMovieMaker", run: "w-4 bg-[#317d90]", tile: "bg-white", icon: <Logo s={24} /> },
  { name: "Chrome プロファイル", run: "w-1.5 bg-[#8a8a8a]", icon: <span className="relative block"><Chrome /><span className="absolute -top-[5px] -right-[5px] grid size-4 place-items-center rounded-full bg-[#7b1fa2]"><span className="size-1 rounded-full border border-[#e6b8f5]" /></span></span> },
  { name: "S", run: "w-1.5 bg-[#8a8a8a]", icon: <Svg s={24}><circle cx="12" cy="12" r="12" fill="#03036e" /><path fill="none" stroke="#31b9f2" strokeWidth="2.600" d="M15.500 8.500c0-4-7-4-7-.5 0 4 7.500 3 7.500 7.500 0 4-7.500 4-7.500 0M9 12.500c1.500-1.500 4-1.500 6-1M12 3v3M12 18v3" /></Svg> },
];

function Taskbar() {
  return (
    <footer className="grid h-12 shrink-0 grid-cols-[1fr_auto_1fr] items-center border-t border-[#bdbdbd] bg-[#f2f0f1] pb-px text-[#222]">
      <button className="flex items-center gap-[7px] pl-[19px] text-left text-[11px] leading-4">
        <Svg s={24}><path fill="#35b8d4" d="M10 0l13 3-3 14L8 12z" /><path fill="#4a2aa8" d="M2 12l14 12H4z" /><rect x="0" y="5" width="20" height="15" rx="2.500" fill="#7c5cf0" /><path fill="#fff" d="M6 8c3 2 4 4 4 6a3.500 3.500 0 0 1-7 0c0-2 2-3 3-6zM13 10h5v1.500h-5zM13 14h5v1.500h-5z" /></Svg>
        <span><span className="text-[10px]">トップ ニュース</span><br /><span className="text-[#555]">【速報】萩生田光...</span></span>
      </button>
      <div className="flex h-full items-center">
        <button aria-label="スタート" className="grid h-10 w-11 place-items-center">
          <svg width="24" height="24" viewBox="0 0 24 24" aria-hidden="true">
            <defs><linearGradient id="win" x1="0" y1="0" x2="1" y2="1"><stop offset="0" stopColor="#4cc3f0" /><stop offset="1" stopColor="#0670c8" /></linearGradient></defs>
            <path fill="url(#win)" d="M0 1a1 1 0 0 1 1-1h10.500v11.500H0zM12.500 0H23a1 1 0 0 1 1 1v10.500H12.500zM0 12.500h11.500V24H1a1 1 0 0 1-1-1zM12.500 12.500H24V23a1 1 0 0 1-1 1H12.500z" />
          </svg>
        </button>
        <label className="mr-[5px] ml-[3px] flex h-[31px] w-[217px] items-center rounded-full border border-[#ddd] border-b-[#bbb] bg-white pr-1 pl-2.5">
          <Svg s={16}><path fill="none" stroke="#222" strokeWidth="2.400" d="M10.500 2.500a7.500 7.500 0 1 1 0 15 7.500 7.500 0 0 1 0-15zM16 16l6.500 6.500" /></Svg>
          <input aria-label="検索" placeholder="検索" className="ml-2.5 w-0 flex-1 bg-transparent text-[14px] leading-5 outline-none placeholder:text-[#555]" />
          <svg width="46" height="24" viewBox="0 0 46 24" aria-hidden="true">
            <ellipse cx="24" cy="20" rx="22" ry="4" fill="#6d5648" />
            <path d="M8 12l2 9M18 12l-3 9M22 13l-4 8" stroke="#5e9454" strokeWidth="2" />
            <g fill="#dde0f6"><circle cx="7" cy="9" r="6" /><circle cx="14" cy="5" r="5" /><circle cx="19" cy="10" r="5" /></g>
            <g fill="#fff"><circle cx="6" cy="12" r="3.500" /><circle cx="12" cy="11" r="4" /></g>
            <g fill="#c0c37a"><circle cx="8" cy="9" r="1.500" /><circle cx="18" cy="10" r="1.500" /></g>
            <rect x="28" y="3" width="12" height="18" rx="2" fill="#f09a42" /><ellipse cx="34" cy="4" rx="6" ry="2" fill="#c87838" /><ellipse cx="34" cy="13" rx="4" ry="6" fill="#ffc16a" />
          </svg>
        </label>
        {APPS.map((a) => (
          <button key={a.name} aria-label={a.name} className="grid h-11 w-11 place-items-center">
            <span className={`relative grid h-10 w-10 place-items-center rounded ${a.tile ?? ""}`}>
              {a.icon}
              {a.run && <span className={`absolute bottom-0 h-[3px] rounded-full ${a.run}`} />}
            </span>
          </button>
        ))}
      </div>
      <div className="flex items-center justify-end pr-5">
        <Chevron dir="up" s={12} className="mr-5" />
        <Svg s={14} className="mr-[22px] text-[#aaa]"><path d="M12 2l-8 20M12 2l8 20M7 13h10M8 22h8M9 7a3 3 0 1 0 6 0 3 3 0 0 0-6 0z" fill="none" stroke="currentColor" strokeWidth="2" /></Svg>
        <Svg s={16} className="mr-[22px]"><circle cx="11" cy="11" r="10.500" fill="#1677d8" /><circle cx="20" cy="19" r="4" fill="#c9382c" /><circle cx="15" cy="21" r="3" fill="#f4c33a" /></Svg>
        <Svg s={17} className="mr-[7px]"><g fill="none" stroke="#222" strokeWidth="1.800"><path d="M1 9c6-6.500 16-6.500 22 0M4.500 13c4.500-4.500 10.500-4.500 15 0M8 16.500c2.500-2.200 5.500-2.200 8 0" /></g><circle cx="12" cy="20" r="2.200" /></Svg>
        <Svg s={17} className="mr-[15px]"><g fill="none" stroke="#222" strokeWidth="1.800"><path d="M1 9h4l6-5v16l-6-5H1zM14 9c1.500 2 1.500 4 0 6M17 6.500c3 3.500 3 7.500 0 11M20 4c4.500 5 4.500 11 0 16" /></g></Svg>
        <time className="mr-2 w-[63px] text-right text-[11px] leading-4">15:31<br />2025/08/15</time>
        <Svg s={15}><path d="M12 3C7 3 5 6 5 10v5l-3 4h20l-3-4v-5c0-4-2-7-7-7zM9 20.500h6c-.5 3-5.500 3-6 0z" /><path fill="none" stroke="#fff" strokeWidth="1.500" d="M9 9h4l-4 5h4M15 10h2l-2 3h2" /><path fill="none" stroke="#222" strokeWidth="1.800" d="M19 1h4l-4 5h4" /></Svg>
      </div>
    </footer>
  );
}

export default function App() {
  return (
    <div className="flex h-screen flex-col overflow-hidden bg-[#f0f0f0] font-['Noto_Sans','Noto_Sans_CJK_JP',sans-serif] [font-feature-settings:'palt']">
      <TitleBar />
      <div className="flex min-h-0 flex-1">
        <main className="flex min-w-0 flex-1 flex-col">
          <div className="flex min-h-0 flex-1 justify-center bg-white"><div className="aspect-[9/16] h-full bg-black" /></div>
          <PlayBar />
          <div className="h-[5px] shrink-0" />
          <Timeline />
        </main>
        <div className="w-[5px] shrink-0" />
        <Properties />
        <div className="flex w-[17px] shrink-0 flex-col items-center pt-1 text-[#555]">
          <Chevron dir="up" className="mb-[75px]" />
          <div className="w-full flex-[758] bg-[#a6a6a6]" />
          <div className="flex-[144]" />
        </div>
      </div>
      <Taskbar />
    </div>
  );
}
